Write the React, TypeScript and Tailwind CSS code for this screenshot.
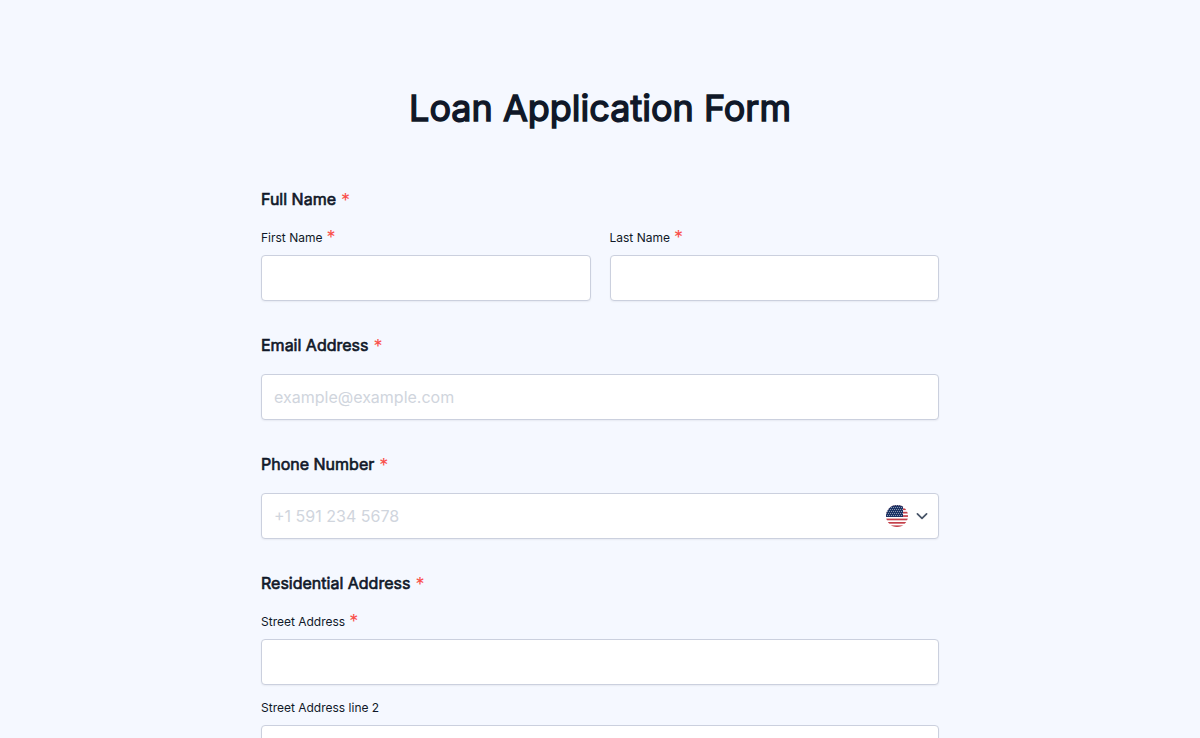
import React from "react";

const field =
  "block h-[46px] w-full rounded-[4px] border border-[#cbd0de] bg-white px-3 text-base text-[#101828] shadow-[0_1px_2px_rgba(16,24,40,0.06)] outline-none placeholder:text-[#d0d5dd] focus:border-blue-500";

const strong = "font-normal [-webkit-text-stroke:0.04em_#101828]";

const star = "text-lg text-[#fa4f4a]";

function Heading({ children, htmlFor }: { children: string; htmlFor?: string }) {
  const content = (
    <>
      <span className={strong}>{children}</span>
      <span className={`${star} leading-7`}>*</span>
    </>
  );
  const style = "flex gap-[5px] text-base leading-6";
  return htmlFor ? (
    <label htmlFor={htmlFor} className={style}>
      {content}
    </label>
  ) : (
    <legend className={style}>{content}</legend>
  );
}

function SubField({ id, label, required }: { id: string; label: string; required?: boolean }) {
  return (
    <div className="min-w-0 flex-1">
      <label htmlFor={id} className="mb-[7px] flex gap-1 text-xs leading-5">
        {label}
        {required && <span className={`${star} leading-5`}>*</span>}
      </label>
      <input id={id} type="text" required={required} className={field} />
    </div>
  );
}

function Flag() {
  const stars: [number, number][] = [];
  for (let row = 0; row < 6; row++) {
    for (let col = 0; col < 9; col++) {
      stars.push([0.5 + (row % 2) + col * 2, 0.5 + row * 2]);
    }
  }
  return (
    <svg viewBox="0 0 22 22" className="h-[22px] w-[22px]" aria-hidden="true">
      <clipPath id="disc">
        <circle cx="11" cy="11" r="11" />
      </clipPath>
      <g clipPath="url(#disc)">
        <rect width="22" height="22" fill="#fff" />
        {[0, 1, 2, 3, 4, 5, 6].map((i) => (
          <rect key={i} y={i * 3.4} width="22" height="1.7" fill="#c4404a" />
        ))}
        <rect width="17" height="12" fill="#1c3465" />
        {stars
          .filter(([x]) => x < 17)
          .map(([x, y]) => (
            <circle key={`${x}-${y}`} cx={x} cy={y} r="0.42" fill="#fff" />
          ))}
      </g>
    </svg>
  );
}

function Chevron() {
  return (
    <svg
      viewBox="0 0 12 8"
      className="h-2 w-3"
      fill="none"
      stroke="#475467"
      strokeWidth="1.7"
      strokeLinecap="round"
      strokeLinejoin="round"
      aria-hidden="true"
    >
      <path d="M1.4 1.8 6 6.4l4.6-4.6" />
    </svg>
  );
}

export default function App() {
  return (
    <main className="min-h-screen bg-[#f5f8ff] px-4 pt-[84px] pb-16 font-[Inter,sans-serif] text-[#101828]">
      <form className="mx-auto flex max-w-[678px] flex-col gap-8">
        <h1 className={`mb-[23px] text-center text-4xl leading-[48px] ${strong}`}>Loan Application Form</h1>
        <fieldset>
          <Heading>Full Name</Heading>
          <div className="mt-[13px] flex gap-[19px]">
            <SubField id="first" label="First Name" required />
            <SubField id="last" label="Last Name" required />
          </div>
        </fieldset>
        <div>
          <Heading htmlFor="email">Email Address</Heading>
          <input id="email" type="email" placeholder="example@example.com" className={field + " mt-[13px]"} />
        </div>
        <div>
          <Heading htmlFor="phone">Phone Number</Heading>
          <div className="relative mt-[13px]">
            <input id="phone" type="tel" placeholder="+1 591 234 5678" className={field} />
            <button
              type="button"
              aria-label="Select country"
              className="absolute inset-y-0 right-[11px] flex items-center gap-2"
            >
              <Flag />
              <Chevron />
            </button>
          </div>
        </div>
        <fieldset>
          <Heading>Residential Address</Heading>
          <div className="mt-[13px] flex flex-col gap-[13px]">
            <SubField id="street" label="Street Address" required />
            <SubField id="street2" label="Street Address line 2" />
          </div>
        </fieldset>
      </form>
    </main>
  );
}
